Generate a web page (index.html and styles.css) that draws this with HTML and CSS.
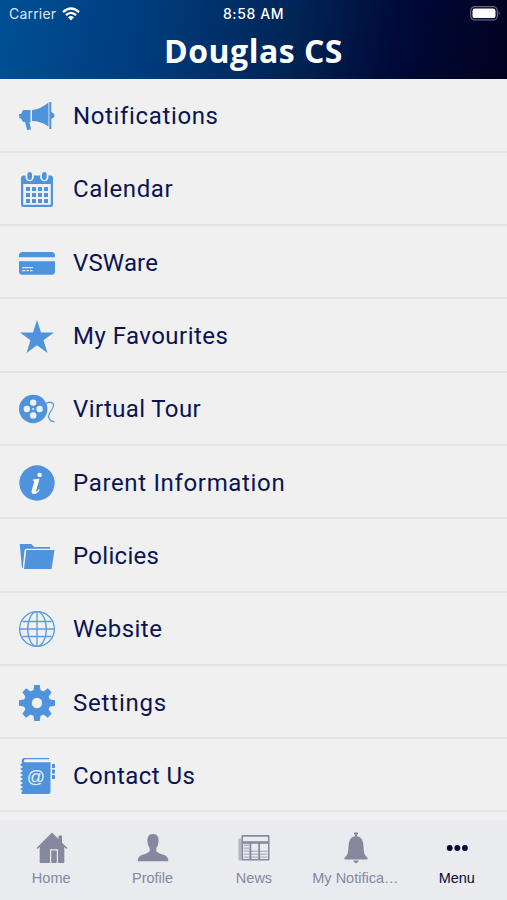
FILE: index.html
```html
<!DOCTYPE html>
<html lang="en">
<head>
<meta charset="utf-8">
<title>Douglas CS</title>
<link rel="stylesheet" href="styles.css">
</head>
<body>
<div class="app">
  <header class="header">
    <div class="status">
      <div class="carrier"><span>Carrier</span>
        <svg class="wifi" viewBox="0 0 18 14"><g fill="none" stroke="#fff" stroke-width="2.3"><path d="M1 5.2Q9-2.200 17 5.200M3.900 8.200Q9 3.600 14.100 8.200"/></g><path d="M6 10.300Q9 7.800 12 10.300L9 13.500Z" fill="#fff"/></svg>
      </div>
      <div class="time">8:58 AM</div>
      <svg class="battery" viewBox="0 0 31 15"><rect x=".7" y=".7" width="26.600" height="13.200" rx="4" fill="none" stroke="#65668b" stroke-width="1.200"/><rect x="2.500" y="2.500" width="23" height="9.600" rx="2.200" fill="#fff"/><path d="M28.600 5.200q2 2.200 0 4.400z" fill="#65668b"/></svg>
    </div>
    <h1 class="title">Douglas CS</h1>
  </header>
  <main class="menu">
    <div class="row"><svg class="icon" viewBox="0 0 36 36"><path d="M0 16h2l2-4h7.500v12H10.500l1.500 7.500-3.800.5L6 24H4l-2-3.500H.500zM13 12q9-1 16.500-7.500v24Q22 23 13 23zM30.300 4h2v10l3 2v3l-3 2v10h-2z"/></svg><span class="label">Notifications</span></div>
    <div class="row"><svg class="icon" viewBox="0 0 36 36"><rect x="2" y="4.500" width="32" height="31.500" rx="2.500"/><path class="cut" d="M4.200 13h27.600v20.800H4.200z"/><circle class="cut" cx="10.700" cy="6" r="4.200"/><circle class="cut" cx="25.300" cy="6" r="4.200"/><rect x="8.400" y="1" width="4.600" height="8" rx="2.300"/><rect x="23" y="1" width="4.600" height="8" rx="2.300"/><path d="M7 16h4v4H7zm6 0h4v4h-4zm6 0h4v4h-4zm6 0h4v4h-4zM7 22h4v4H7zm6 0h4v4h-4zm6 0h4v4h-4zm6 0h4v4h-4zM7 28h4v4H7zm6 0h4v4h-4zm6 0h4v4h-4zm6 0h4v4h-4z"/></svg><span class="label">Calendar</span></div>
    <div class="row"><svg class="icon" viewBox="0 0 36 36"><path d="M0 12.300V10.500Q0 7 3.500 7h29Q36 7 36 10.500v1.800zM0 16.200h36v10q0 3.500-3.500 3.500h-29Q0 29.700 0 26.200z"/><path d="M3 22.700h11M3 25.700h3.500m1 0H10m1 0h2.500" stroke="#d7e6f5" stroke-width="1.300"/></svg><span class="label w-vsware">VSWare</span></div>
    <div class="row"><svg class="icon" viewBox="0 0 36 36"><path d="M18 2l4 12.400h13l-10.500 7.800L28.500 35 18 27.200 7.500 35l4-12.800L1 14.400h13z"/></svg><span class="label w-fav">My Favourites</span></div>
    <div class="row"><svg class="icon" viewBox="0 0 36 36"><circle cx="14.200" cy="18" r="14.200"/><g class="cut"><circle cx="14.200" cy="11.600" r="3.200"/><circle cx="14.200" cy="24.400" r="3.200"/><circle cx="7.800" cy="18" r="3.200"/><circle cx="20.600" cy="18" r="3.200"/><circle cx="14.200" cy="18" r="1"/></g><path class="line" d="M27 12.500q4-2.500 7 0c3 4-5 8.500-4.500 13.500q1.500 5 6 4.500"/></svg><span class="label w-tour">Virtual Tour</span></div>
    <div class="row"><svg class="icon" viewBox="0 0 36 36"><circle cx="18" cy="18" r="17.700"/><g fill="#fff"><circle cx="20.600" cy="9.900" r="2.200"/><path d="M14 14.500l6.500-.8-3.300 11.500q-.5 2 1 1l1.700-1.900.8.600q-2.700 4.100-5.700 4.100-3.100-.2-2.300-3.500l2.500-8.700q.4-1.300-1.500-1.300z"/></g></svg><span class="label w-parent">Parent Information</span></div>
    <div class="row"><svg class="icon" viewBox="0 0 36 36"><path d="M.7 6h11.500l3.100 3H31v1.700H7.500Q5.800 10.700 5.500 12.500L3.700 30H3zM7.300 12h28.200L32.600 31H5z"/></svg><span class="label w-policies">Policies</span></div>
    <div class="row"><svg class="icon" viewBox="0 0 36 36"><g class="line"><circle cx="18" cy="18" r="17.400"/><ellipse cx="18" cy="18" rx="9.300" ry="17.400"/><path d="M18 .6v34.800M.6 18h34.800M3.400 10.500h29.200M3.400 25.500h29.200"/></g></svg><span class="label w-website">Website</span></div>
    <div class="row"><svg class="icon" viewBox="0 0 36 36"><circle cx="18" cy="18" r="9.200" fill="none" stroke="#4f93dc" stroke-width="8"/><g id="teeth"><path id="tooth" d="M14.300 6l1-6h5.400l1 6z"/><use href="#tooth" transform="rotate(45 18 18)"/><use href="#tooth" transform="rotate(90 18 18)"/><use href="#tooth" transform="rotate(135 18 18)"/></g><use href="#teeth" transform="rotate(180 18 18)"/></svg><span class="label w-settings">Settings</span></div>
    <div class="row"><svg class="icon" viewBox="0 0 36 36"><path d="M4.500 0H30v1.300H5.500q-1 1.700 0 3H31.500V34q0 2-2 2H3l-1-2 2-1-3-2 3-2-3-2 3-2-3-2 3-2-3-2 3-2-3-2 3-2-3-2 3-2-3-2 2-2Q2 1 4.500 0zM33 6h3v4h-3zm0 5.500h3v4h-3zm0 5.500h3v4h-3z"/><text class="at" x="16.800" y="25.200">@</text></svg><span class="label w-contact">Contact Us</span></div>
  </main>
  <nav class="tabs">
    <div class="tab"><svg viewBox="0 0 32 32"><path d="M16 .5l6.500 6.600V3.500H26v7.200l5.500 5.300-1 1L28.300 15v16H22V17.200h-8V31H3.700V15l-2.200 2-1-1zM15.200 18.400h5.600V31h-5.600z"/></svg><span>Home</span></div>
    <div class="tab"><svg viewBox="0 0 32 32"><path d="M16 2c4.500 0 6 3.500 5.500 8-.3 3-1.300 4.800-2.200 6v3.200q2 2 8 3.800 4 1.300 4 6.300H.7q0-5 4-6.300 6-1.800 8-3.800V16c-.9-1.200-1.900-3-2.200-6-.5-4.500 1-8 5.500-8z"/></svg><span>Profile</span></div>
    <div class="tab"><svg viewBox="0 0 32 32"><path opacity=".55" d="M.5 6.500h3V28.500H2Q.5 28.500.5 27z"/><path fill-rule="evenodd" d="M4.500 3H30.500Q31.500 3 31.500 4V27.500Q31.500 28.500 30.500 28.500H4.500Q3.500 28.500 3.500 27.500V4Q3.500 3 4.500 3zM5 4.700V9.300H30V4.700zM5 11.700V27h6.500V11.700zm8.300 0V27h7V11.700zm8.700 0V27h8V11.700z"/><path opacity=".5" d="M5.500 12.500h5.500v1.700H5.500zm0 3h5.500v1.700H5.500zM5.500 18.500h24V20h-24zm0 3h24V23h-24zm0 3h24V26h-24z"/></svg><span>News</span></div>
    <div class="tab"><svg viewBox="0 0 32 32"><path d="M14 .5h4v1.800l-1 .5v1.400q5.500.800 6.200 7l.7 8q.3 4 3.500 6v2.300H4.600v-2.300q3.200-2 3.500-6l.7-8q.7-6.200 6.200-7V2.800l-1-.5zM13.300 28.500h5.400l-.7 1.500-2 1.500-2-1.500z"/></svg><span>My Notifica…</span></div>
    <div class="tab active"><svg viewBox="0 0 32 32"><circle cx="8.700" cy="16" r="2.900"/><circle cx="16.300" cy="16" r="2.900"/><circle cx="23.900" cy="16" r="2.900"/></svg><span>Menu</span></div>
  </nav>
</div>
</body>
</html>
```
FILE: styles.css
```css
* { box-sizing: border-box; }
body { margin: 0; background: #f0f0f0; }
.app { width: 507px; height: 900px; display: flex; flex-direction: column; overflow: hidden; }
.header { height: 79px; flex: none; color: #fff; background: linear-gradient(100deg, #005096 0%, #003b7b 30%, #002455 58%, #000938 78%, #00021f 100%); }
.status { height: 27px; display: grid; grid-template-columns: 1fr auto 1fr; align-items: center; padding: 0 6px 0 9px; font: 14px/27px Inter, sans-serif; }
.carrier { display: flex; align-items: center; gap: 6px; letter-spacing: .2px; color: #dce8f4; }
.wifi { width: 18px; height: 14px; }
.time { font-weight: 500; font-size: 14px; letter-spacing: .6px; margin-right: 3px; }
.battery { width: 31px; height: 15px; justify-self: end; }
.title { margin: 0; padding-top: 1px; font: 700 32px/46px "Open Sans", sans-serif; text-align: center; letter-spacing: .5px; }
.menu { flex: 1; min-height: 0; overflow: hidden; padding-top: .5px; }
.row { height: 73.3px; display: flex; align-items: center; gap: 18px; padding: 2px 0 0 19px; border-bottom: 2px solid #e3e3e4; }
.icon { width: 36px; height: 36px; flex: none; fill: #4f93dc; overflow: visible; }
.icon .cut { fill: #f0f0f0; }
.icon .line { fill: none; stroke: #5b9bdf; stroke-width: 1.3; }
.at { font: 18px "Liberation Sans", sans-serif; fill: #e4eefa; text-anchor: middle; }
.label { font: 24px/36px Roboto, sans-serif; color: #0b1452; letter-spacing: .64px; white-space: nowrap; }
.w-vsware { letter-spacing: .15px; }
.w-fav, .w-contact { letter-spacing: .46px; }
.w-tour { letter-spacing: .38px; }
.w-policies { letter-spacing: .3px; }
.w-website { letter-spacing: .5px; }
.w-settings { letter-spacing: .8px; }
.w-parent { letter-spacing: .66px; }
.tabs { height: 80px; flex: none; display: grid; grid-template-columns: repeat(5, 1fr); padding-left: 1px; margin-right: -1px; background: #e9ebee; }
.tab { display: flex; flex-direction: column; align-items: center; padding-top: 12px; color: #85889f; font: 14.5px/18px "Liberation Sans", sans-serif; white-space: nowrap; }
.tab svg { width: 32px; height: 32px; fill: currentColor; margin-bottom: 5px; }
.tab span { margin-right: 1px; }
.active { color: #06083f; }
```
